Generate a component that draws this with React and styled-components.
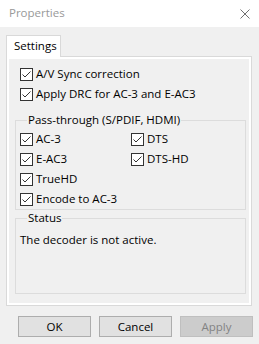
import React from "react";
import styled, { createGlobalStyle } from "styled-components";

const Global = createGlobalStyle`
  html, body {
    margin: 0;
    padding: 0;
    background: #f0f0f0;
    width: 259px;
    height: 344px;
    overflow: hidden;
  }
  body {
    font-family: "Open Sans", "Liberation Sans", sans-serif;
    font-size: 11.5px;
    color: #000;
  }
  * { box-sizing: border-box; }
`;

const Window = styled.div`
  width: 259px;
  height: 344px;
  display: flex;
  flex-direction: column;
  background: #f0f0f0;
`;

const TitleBar = styled.div`
  height: 27px;
  background: #fff;
  display: flex;
  align-items: center;
  justify-content: space-between;
  padding: 0 9px 0 9px;
`;

const Title = styled.span`
  color: #999999;
  font-size: 11.5px;
  line-height: 14px;
  margin-top: -1px;
`;

const CloseIcon = styled.svg`
  width: 10px;
  height: 10px;
  margin-top: 1px;
`;

const Body = styled.div`
  padding: 8px 8px 0 6px;
`;

const TabStrip = styled.div`
  display: flex;
  position: relative;
  z-index: 1;
  margin-bottom: -1px;
`;

const Tab = styled.div`
  width: 55px;
  height: 22px;
  border: 1px solid #d9d9d9;
  border-bottom: none;
  background: ${(p) => (p.$active ? "#fff" : "#f0f0f0")};
  padding: 2px 0 0 7px;
  line-height: 16px;
`;

const TabPanel = styled.div`
  width: 246px;
  border: 1px solid #d9d9d9;
  background: #fff;
  padding: 2px;
`;

const Page = styled.div`
  background: #f0f0f0;
  padding: 5px 3px 9px 6px;
`;

const TopChecks = styled.div`
  padding-left: 5px;
  margin-bottom: 8px;
`;

const Row = styled.label`
  display: flex;
  align-items: center;
  gap: 3px;
  height: 20px;
  line-height: 14px;
  white-space: nowrap;
`;

const Box = styled.span`
  width: 13px;
  height: 13px;
  border: 1px solid #333333;
  background: #fff;
  display: inline-flex;
  align-items: center;
  justify-content: center;
  flex: none;
`;

const Group = styled.fieldset`
  margin: 0;
  min-width: 0;
  border: 1px solid #dcdcdc;
  padding: ${(p) => p.$pad};
`;

const Legend = styled.legend`
  padding: 0 1px;
  margin-left: 7px;
  line-height: 16px;
`;

const Grid = styled.div`
  display: grid;
  grid-template-columns: 111px auto;
`;

const StatusText = styled.div`
  line-height: 14px;
`;

const Footer = styled.div`
  display: flex;
  justify-content: flex-end;
  gap: 8px;
  padding: 10px 6px 0 0;
`;

const Button = styled.button`
  width: 73px;
  height: 21px;
  border: 1px solid ${(p) => (p.disabled ? "#bfbfbf" : "#adadad")};
  background: ${(p) => (p.disabled ? "#cccccc" : "#e1e1e1")};
  color: ${(p) => (p.disabled ? "#838383" : "#000")};
  font-family: inherit;
  font-size: 11.5px;
  line-height: 14px;
  padding: 0;
  margin: 0;
`;

function Check({ label }) {
  return (
    <Row>
      <Box>
        <svg width="11" height="11" viewBox="0 0 11 11">
          <path d="M1.5 5.5 L4 8 L9.5 2.5" fill="none" stroke="#333" strokeWidth="1" />
        </svg>
      </Box>
      <span>{label}</span>
    </Row>
  );
}

export default function App() {
  return (
    <Window>
      <Global />
      <TitleBar>
        <Title>Properties</Title>
        <CloseIcon viewBox="0 0 10 10">
          <path d="M0.5 0.5 L9.5 9.5 M9.5 0.5 L0.5 9.5" stroke="#707070" strokeWidth="1" fill="none" />
        </CloseIcon>
      </TitleBar>
      <Body>
        <TabStrip>
          <Tab $active>Settings</Tab>
        </TabStrip>
        <TabPanel>
          <Page>
            <TopChecks>
              <Check label="A/V Sync correction" />
              <Check label="Apply DRC for AC-3 and E-AC3" />
            </TopChecks>
            <Group $pad="1px 4px 0 4px">
              <Legend>Pass-through (S/PDIF, HDMI)</Legend>
              <Grid>
                <Check label="AC-3" />
                <Check label="DTS" />
                <Check label="E-AC3" />
                <Check label="DTS-HD" />
                <Check label="TrueHD" />
                <span />
                <Check label="Encode to AC-3" />
              </Grid>
            </Group>
            <Group $pad="7px 4px 46px 4px">
              <Legend>Status</Legend>
              <StatusText>The decoder is not active.</StatusText>
            </Group>
          </Page>
        </TabPanel>
      </Body>
      <Footer>
        <Button>OK</Button>
        <Button>Cancel</Button>
        <Button disabled>Apply</Button>
      </Footer>
    </Window>
  );
}
